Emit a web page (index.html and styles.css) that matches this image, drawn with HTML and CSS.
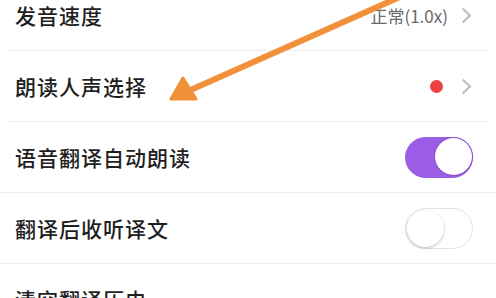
FILE: index.html
```html
<!DOCTYPE html>
<html lang="zh">
<head>
  <meta charset="UTF-8">
  <title>翻译设置</title>
  <link rel="stylesheet" href="styles.css">
</head>
<body>
  <div class="settings">
    <div class="row">
      <span class="label">发音速度</span>
      <div class="extra">
        <span class="value">正常(1.0x)</span>
        <span class="chevron"></span>
      </div>
    </div>
    <div class="row">
      <span class="label">朗读人声选择</span>
      <div class="extra">
        <span class="dot"></span>
        <span class="chevron"></span>
      </div>
    </div>
    <div class="row row-full">
      <span class="label">语音翻译自动朗读</span>
      <div class="toggle on"><span class="knob"></span></div>
    </div>
    <div class="row row-full">
      <span class="label">翻译后收听译文</span>
      <div class="toggle"><span class="knob"></span></div>
    </div>
    <div class="row row-full">
      <span class="label">清空翻译历史</span>
    </div>
  </div>

  <svg class="arrow" width="496" height="298" viewBox="0 0 496 298">
    <line x1="402" y1="-4" x2="186" y2="92" stroke="#f0913a" stroke-width="6" stroke-linecap="round"/>
    <polygon points="171,99 183,78 196,99" fill="#f0913a" stroke="#f0913a" stroke-width="3" stroke-linejoin="round"/>
  </svg>
</body>
</html>
```

FILE: styles.css
```css
body {
  margin: 0;
  background: #fff;
  font-family: "Noto Sans CJK SC", "Liberation Sans", sans-serif;
  color: #1f1f1f;
  overflow: hidden;
  position: relative;
  width: 496px;
  height: 298px;
}

.settings {
  margin-top: -20px;
}

.row {
  height: 70px;
  display: flex;
  align-items: center;
  justify-content: space-between;
  border-bottom: 1px solid #ececec;
  margin-left: 8px;
  margin-right: 6px;
  padding-left: 7px;
  padding-right: 17px;
}

.row-full {
  margin-left: 0;
  margin-right: 0;
  padding-left: 15px;
  padding-right: 23px;
}

.label {
  font-size: 21px;
  font-weight: 500;
  letter-spacing: 1px;
}

.extra {
  display: flex;
  align-items: center;
}

.value {
  font-size: 17px;
  color: #6a6a6a;
  margin-right: 10px;
}

.dot {
  width: 13px;
  height: 13px;
  border-radius: 50%;
  background: #e8413f;
  margin-right: 15px;
}

.chevron {
  width: 9px;
  height: 9px;
  border-top: 2px solid #bdbdbd;
  border-right: 2px solid #bdbdbd;
  transform: rotate(45deg);
  margin-right: 4px;
}

.toggle {
  width: 68px;
  height: 41px;
  border-radius: 21px;
  border: 1px solid #e2e2e2;
  background: #fff;
  position: relative;
  box-sizing: border-box;
}

.toggle .knob {
  position: absolute;
  top: 1px;
  left: 1px;
  width: 37px;
  height: 37px;
  border-radius: 50%;
  background: #fff;
  box-shadow: 0 1px 3px rgba(0, 0, 0, 0.25);
}

.toggle.on {
  background: #9b5de5;
  border-color: #9b5de5;
}

.toggle.on .knob {
  left: auto;
  right: 0;
  top: 0;
  box-shadow: 0 0 0 1px #8a4fd0;
}

.arrow {
  position: absolute;
  top: 0;
  left: 0;
  pointer-events: none;
}
```
